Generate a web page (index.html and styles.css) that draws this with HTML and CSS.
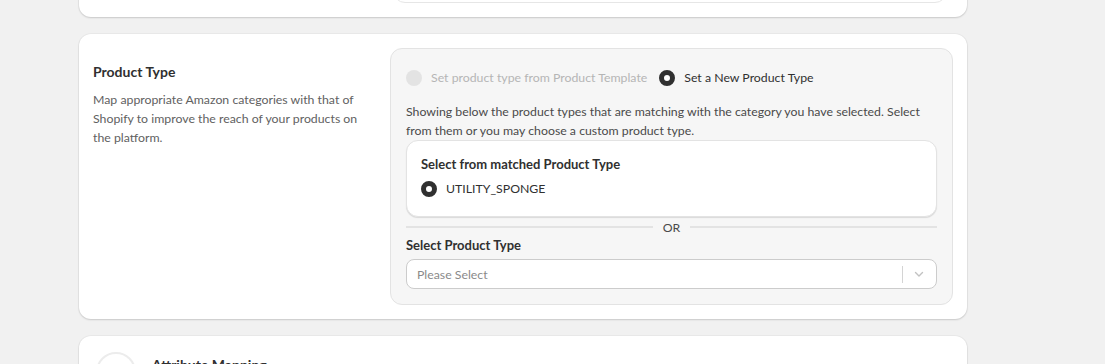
FILE: index.html
```html
<!DOCTYPE html>
<html lang="en">
<head>
    <meta charset="UTF-8">
    <link rel="stylesheet" href="styles.css">
</head>
<body>
    <div class="page">
        <div class="card card-prev">
            <div class="panel-prev"></div>
        </div>

        <div class="card section">
            <div class="section-info">
                <h2 class="section-title">Product Type</h2>
                <p class="section-desc">Map appropriate Amazon categories with that of Shopify to improve the reach of your products on the platform.</p>
            </div>
            <div class="panel">
                <div class="radio-row">
                    <label class="radio disabled"><span class="dot"></span>Set product type from Product Template</label>
                    <label class="radio"><span class="dot checked"></span>Set a New Product Type</label>
                </div>
                <p class="hint">Showing below the product types that are matching with the category you have selected. Select from them or you may choose a custom product type.</p>
                <div class="matched">
                    <div class="matched-title">Select from matched Product Type</div>
                    <label class="radio"><span class="dot checked"></span>UTILITY_SPONGE</label>
                </div>
                <div class="divider"><span>OR</span></div>
                <div class="field-label">Select Product Type</div>
                <div class="select">
                    <span class="placeholder">Please Select</span>
                    <span class="sep"></span>
                    <svg class="chev" width="14" height="14" viewBox="0 0 20 20"><path d="M5 8l5 5 5-5" fill="none" stroke="#c2c2c2" stroke-width="2" stroke-linecap="round" stroke-linejoin="round"/></svg>
                </div>
            </div>
        </div>

        <div class="card next">
            <span class="avatar"></span>
            <h2 class="section-title">Attribute Mapping</h2>
        </div>
    </div>
</body>
</html>
```

FILE: styles.css
```css
body{
    margin: 0;
    background: #f1f1f1;
    font-family: Lato, "Liberation Sans", sans-serif;
    font-size: 12.3px;
    color: #303030;
}
.page{
    width: 888px;
    margin-left: 79px;
    display: flex;
    flex-direction: column;
    gap: 17px;
}
.card{
    background: #fff;
    border-radius: 12px;
    box-shadow: 0 0 0 1px rgba(0,0,0,0.03), 0 1px 2px rgba(0,0,0,0.14);
}
.card-prev{
    height: 80px;
    margin-top: -63px;
    padding: 0 20px 14px 314px;
    box-sizing: border-box;
    display: flex;
    align-items: flex-end;
}
.panel-prev{
    flex: 1;
    height: 40px;
    background: #fff;
    border: 1px solid #e6e6e6;
    border-radius: 0 0 12px 12px;
}
.section{
    display: grid;
    grid-template-columns: 297px 1fr;
    padding: 14px;
}
.section-info{
    padding-top: 14px;
}
.section-title{
    margin: 0;
    font-size: 14px;
    font-weight: 700;
    line-height: 20px;
}
.section-desc{
    margin: 8px 0 0;
    color: #616161;
    line-height: 19px;
    width: 272px;
}
.panel{
    background: #f6f6f6;
    border: 1px solid #e3e3e3;
    border-radius: 12px;
    padding: 16px 15px 15px;
}
.radio-row{
    display: flex;
    gap: 12px;
    height: 26px;
    align-items: center;
}
.radio{
    display: flex;
    align-items: center;
    gap: 9px;
    line-height: 20px;
}
.radio.disabled{
    color: #b5b5b5;
}
.dot{
    width: 16px;
    height: 16px;
    border-radius: 50%;
    background: #e3e3e3;
    box-sizing: border-box;
}
.dot.checked{
    background: #fff;
    border: 5px solid #303030;
}
.hint{
    margin: 11px 0 0;
    line-height: 19px;
    color: #4a4a4a;
}
.matched{
    background: #fff;
    border: 1px solid #e3e3e3;
    border-radius: 12px;
    box-shadow: 0 1px 1px rgba(0,0,0,0.12);
    padding: 13px 14px 16px;
}
.matched-title{
    font-size: 13px;
    font-weight: 700;
    line-height: 20px;
}
.matched .radio{
    margin-top: 4px;
    height: 22px;
}
.divider{
    display: flex;
    align-items: center;
    gap: 10px;
    height: 20px;
    color: #4a4a4a;
}
.divider::before,
.divider::after{
    content: "";
    flex: 1;
    height: 2px;
    background: #e3e3e3;
}
.field-label{
    font-size: 13px;
    font-weight: 700;
    line-height: 17px;
}
.select{
    margin-top: 5px;
    height: 30px;
    box-sizing: border-box;
    border: 1px solid #cccccc;
    border-radius: 8px;
    background: #fff;
    display: flex;
    align-items: center;
    padding: 0 10px;
}
.placeholder{
    flex: 1;
    color: #8a8a8a;
}
.sep{
    width: 1px;
    height: 17px;
    background: #d4d4d4;
    margin-right: 9px;
}
.chev{
    display: block;
}
.next{
    height: 60px;
    padding: 16px 17px;
    display: flex;
    gap: 16px;
    align-items: flex-start;
}
.avatar{
    width: 40px;
    height: 40px;
    border-radius: 50%;
    border: 2px solid #ececec;
    box-sizing: border-box;
}
.next .section-title{
    margin-top: 3px;
}
```
